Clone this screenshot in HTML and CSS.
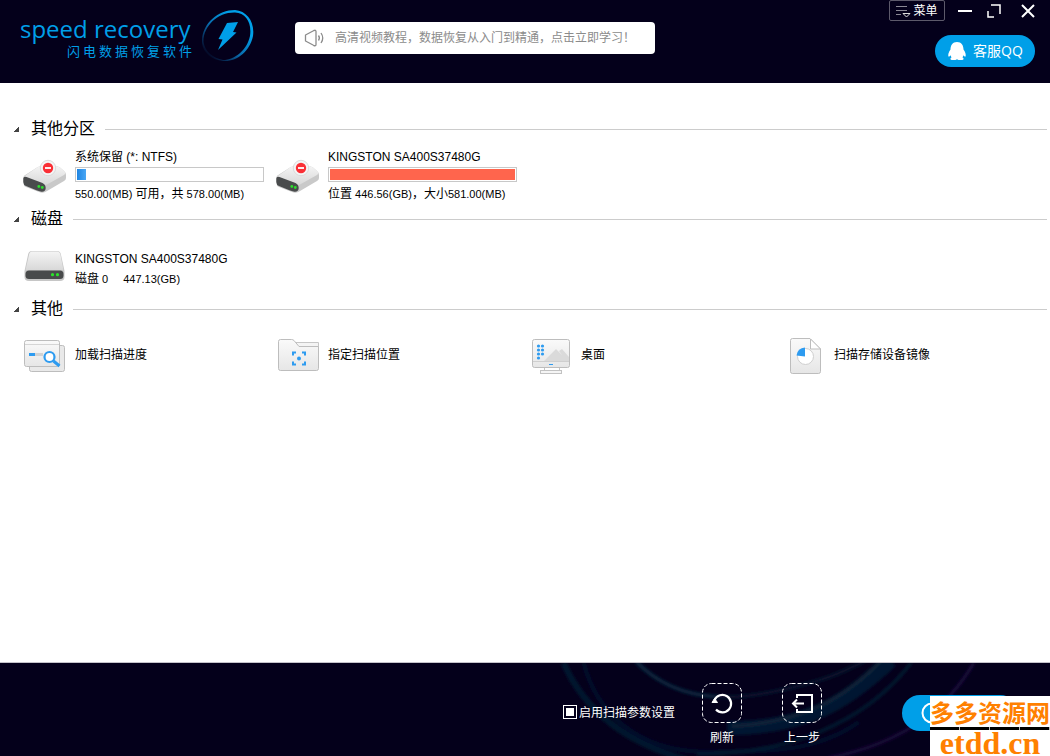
FILE: index.html
```html
<!DOCTYPE html>
<html lang="zh-CN">
<head>
<meta charset="utf-8">
<title>闪电数据恢复软件</title>
<link rel="stylesheet" href="styles.css">
</head>
<body>
<svg class="defs" aria-hidden="true">
  <defs>
    <linearGradient id="metal" x1="0" y1="0" x2="0" y2="1"><stop offset="0" stop-color="#f4f4f4"/><stop offset="1" stop-color="#d8d8d8"/></linearGradient>
    <linearGradient id="paper" x1="0" y1="0" x2="0" y2="1"><stop offset="0" stop-color="#fafafa"/><stop offset="1" stop-color="#e6e6e6"/></linearGradient>
    <linearGradient id="ring" x1="1" y1="0" x2="0.1" y2="0.9"><stop offset="0.3" stop-color="#009fe8"/><stop offset="0.65" stop-color="#0a68a8"/><stop offset="1" stop-color="#04001b"/></linearGradient>
    <filter id="soft"><feGaussianBlur stdDeviation="1.500"/></filter>
    <symbol id="drive-locked" viewBox="0 0 44 36">
      <path d="M1.500 20Q1.500 18.500 4 17.500L15 10.500Q17 9 20 9H33Q36 9 38 10.500L42 14Q44 15.500 44 18V21Q44 23 42 24L25 34Q21 37 17 35L4 30Q1.500 29 1.300 26Z" fill="#c9c9c9"/>
      <path d="M2 19.500 15 10.500Q17 9 20 9H33Q36 9 38 10.500L42.500 14.500Q44 16.500 42 18L25 27.500Q23 28.500 20 27Z" fill="url(#metal)"/>
      <path d="M1.300 21.500Q1.500 19 4.500 20L20.500 26Q23.700 27.500 23.700 31Q23.500 35 19.500 34.700Q17 34.500 4 29Q1.500 28 1.300 25Z" fill="#494b4c"/>
      <circle cx="16.800" cy="29.500" r="1.400" fill="#2edc2e"/><circle cx="20.300" cy="30.500" r="1.400" fill="#2edc2e"/>
      <circle cx="26" cy="11" r="7.700" fill="#f4f4f4" stroke="#d4d4d4" stroke-width=".8"/>
      <circle cx="26" cy="11" r="5.200" fill="#fa2f35"/><path d="M23 11h6" stroke="#fff" stroke-width="1.800"/>
    </symbol>
  </defs>
</svg>

<header class="topbar">
  <div class="brand">
    <div class="brand-text">
      <div class="brand-en">speed recovery</div>
      <div class="brand-cn">闪电数据恢复软件</div>
    </div>
    <svg class="brand-mark" viewBox="0 0 52 52" width="52" height="52" aria-hidden="true">
      <path d="M0 33C-1 15 15 0 33 0C45 1 53 12 51 26C48 41 35 52 21 51C10 50 1 43 0 33ZM1.500 32C3 42 11 48 21 50C33 50 45 40 48 26C50 13 44 3 33 2.500C16 2 1 16 1.500 32Z" fill="url(#ring)" fill-rule="evenodd"/>
      <path d="M25 13 36 12 31 22 34.500 22.500 16 40 20.500 29.500 16.500 29Z" fill="#009fe8"/>
    </svg>
  </div>
  <a class="notice" href="#">
    <svg width="22" height="20" viewBox="0 0 22 20" fill="none" stroke="#8b8b8b" stroke-width="1.300" stroke-linejoin="round" aria-hidden="true"><path d="M1.500 7 9.500 2.700Q12 1.500 12 3.500V16.500Q12 18.500 9.500 17.300L1.500 13ZM14.500 7.500Q16.300 10 14.500 12.500M17 5Q20.500 10 17 15"/></svg>
    <span>高清视频教程，数据恢复从入门到精通，点击立即学习！</span>
  </a>
  <div class="tools">
    <div class="window-buttons">
      <button class="menu-button" type="button">
        <svg width="15" height="14" viewBox="0 0 15 14" fill="none" aria-hidden="true"><path d="M0 2.500H11M0 6.500H11M0 10.500H5" stroke="#8a8894"/><path d="M7 9.500H14L10.500 13Z" stroke="#ddd"/></svg>
        <span>菜单</span>
      </button>
      <button class="win" type="button" aria-label="最小化"><svg width="14" height="14" viewBox="0 0 14 14"><path d="M0 7H14" stroke="#fff" stroke-width="2"/></svg></button>
      <button class="win" type="button" aria-label="最大化"><svg width="14" height="14" viewBox="0 0 14 14" fill="none" stroke="#fff" stroke-width="1.500"><path d="M4 1H13V10M1 7V13H7"/></svg></button>
      <button class="win" type="button" aria-label="关闭"><svg width="14" height="14" viewBox="0 0 14 14"><path d="M1 1 13 13M13 1 1 13" stroke="#fff" stroke-width="2"/></svg></button>
    </div>
    <button class="service" type="button">
      <svg width="20" height="20" viewBox="0 0 20 20" fill="#fff" aria-hidden="true"><path d="M10 1C5.500 1 3.500 4.500 3.500 8.500C1.500 11 .8 14 1.500 15.500C2 16 3 15 3.500 14.300L4.500 16.500C3 17 3 19 5 19H8.500L10 18.300 11.500 19H15C17 19 17 17 15.500 16.500L16.500 14.300C17 15 18 16 18.500 15.500C19.200 14 18.500 11 16.500 8.500C16.500 4.500 14.500 1 10 1Z"/></svg>
      <span>客服QQ</span>
    </button>
  </div>
</header>

<main class="content">
  <section>
    <h2 class="heading"><i class="caret"></i><span>其他分区</span></h2>
    <div class="items partitions">
      <div class="item">
        <svg class="icon" viewBox="0 0 44 36" aria-hidden="true"><use href="#drive-locked"/></svg>
        <div class="info">
          <div class="name">系统保留 (*: NTFS)</div>
          <div class="usage"><div class="used" style="width:5%"></div></div>
          <div class="detail">550.00(MB) <span>可用，共</span> 578.00(MB)</div>
        </div>
      </div>
      <div class="item">
        <svg class="icon" viewBox="0 0 44 36" aria-hidden="true"><use href="#drive-locked"/></svg>
        <div class="info">
          <div class="name">KINGSTON SA400S37480G</div>
          <div class="usage"><div class="used full" style="width:100%"></div></div>
          <div class="detail"><span>位置</span> 446.56(GB)<span>，大小</span>581.00(MB)</div>
        </div>
      </div>
    </div>
  </section>
  <section>
    <h2 class="heading"><i class="caret"></i><span>磁盘</span></h2>
    <div class="items disks">
      <div class="item">
        <svg class="icon" viewBox="0 0 44 36" aria-hidden="true">
          <path d="M6 5Q6.500 1 10 1H35Q38.500 1 39 5L42.500 21V27Q42.500 31 38 31H7Q2.500 31 2.500 27V21Z" fill="#c6c6c6"/>
          <path d="M7 5Q7.500 1.500 10 1.500H35Q38 1.500 38.500 5L41.500 20H3.500Z" fill="url(#metal)"/>
          <rect x="3.500" y="20.500" width="38" height="8.500" rx="3.500" fill="#484a4b"/>
          <circle cx="30.500" cy="24.700" r="1.600" fill="#2be32b"/><circle cx="35.500" cy="24.700" r="1.600" fill="#2be32b"/>
        </svg>
        <div class="info disk-info">
          <div class="name">KINGSTON SA400S37480G</div>
          <div class="detail disk-detail"><div><span>磁盘</span> 0</div><div>447.13(GB)</div></div>
        </div>
      </div>
    </div>
  </section>
  <section>
    <h2 class="heading"><i class="caret"></i><span>其他</span></h2>
    <div class="items others">
      <div class="item">
        <svg class="icon" viewBox="0 0 44 36" aria-hidden="true">
          <rect x="7.500" y="7.500" width="35" height="26" rx="2" fill="#e9e9e9" stroke="#bdbdbd"/>
          <rect x="2.500" y="2.500" width="35" height="26" rx="2" fill="url(#paper)" stroke="#bdbdbd"/><path d="M3 6.500H37" stroke="#d5d5d5"/>
          <path d="M7 16.500H13" stroke="#2d9bf0" stroke-width="3"/><path d="M13 16.500H21" stroke="#d2d2d2" stroke-width="3"/>
          <circle cx="27.500" cy="19" r="5" fill="#fff" stroke="#2d9bf0" stroke-width="2.200"/><path d="M31.500 23 37.500 28" stroke="#2d9bf0" stroke-width="3"/>
        </svg>
        <button class="action" type="button">加载扫描进度</button>
      </div>
      <div class="item">
        <svg class="icon" viewBox="0 0 44 36" aria-hidden="true">
          <path d="M20 4.500H43.500V12H20Z" fill="#f4f4f4" stroke="#c6c6c6"/>
          <path d="M3.500 3.500Q3.500 1.500 5.500 1.500H16.500Q18 1.500 19 2.500L24 8.500H43.500V30.500Q43.500 32.500 41.500 32.500H5.500Q3.500 32.500 3.500 30.500Z" fill="url(#paper)" stroke="#bdbdbd"/>
          <path d="M18 17.500V14.500H21M27 14.500H30V17.500M18 23.500V26.500H21M27 26.500H30V23.500" fill="none" stroke="#2d9bf0" stroke-width="2"/><circle cx="24" cy="20.500" r="2" fill="#2d9bf0"/>
        </svg>
        <button class="action" type="button">指定扫描位置</button>
      </div>
      <div class="item">
        <svg class="icon" viewBox="0 0 44 36" aria-hidden="true">
          <path d="M16.500 30V32.500M31.500 30V32.500" stroke="#c4c4c4"/><rect x="12.500" y="32.500" width="21" height="3" fill="#f5f5f5" stroke="#c2c2c2"/>
          <rect x="4.500" y="1.500" width="37" height="28" rx="2" fill="url(#paper)" stroke="#bdbdbd"/>
          <path d="M16 23 28 11 34 17 31 13 34 11 41 19V23Z" fill="#dadada"/><path d="M5 23.500H41" stroke="#cfcfcf"/><path d="M21 26.500H25" stroke="#2d9bf0"/>
          <g fill="#2d9bf0"><circle cx="10.500" cy="8" r="1.600"/><circle cx="14.500" cy="8" r="1.600"/><circle cx="10.500" cy="12" r="1.600"/><circle cx="14.500" cy="12" r="1.600"/><circle cx="10.500" cy="16" r="1.600"/><circle cx="14.500" cy="16" r="1.600"/><circle cx="10.500" cy="20" r="1.600"/></g>
        </svg>
        <button class="action" type="button">桌面</button>
      </div>
      <div class="item">
        <svg class="icon" viewBox="0 0 44 36" aria-hidden="true">
          <path d="M9.500 2.500Q9.500.5 11.500.5H29L39.500 11V33.500Q39.500 35.500 37.500 35.500H11.500Q9.500 35.500 9.500 33.500Z" fill="url(#paper)" stroke="#bdbdbd"/>
          <path d="M29.500 1V11H39.500Z" fill="#fff" stroke="#bdbdbd"/>
          <circle cx="24.500" cy="18.500" r="8" fill="#fff" stroke="#cfcfcf"/><path d="M24 18.500V9.500Q16.500 10 15.500 17.500Z" fill="#2d9bf0"/>
        </svg>
        <button class="action" type="button">扫描存储设备镜像</button>
      </div>
    </div>
  </section>
</main>

<footer class="bottombar">
  <svg class="waves" viewBox="0 0 530 94" preserveAspectRatio="none" aria-hidden="true">
    <g fill="none" filter="url(#soft)">
      <path d="M48 0C70 50 110 80 170 98" stroke="#06142f" stroke-width="6"/>
      <path d="M68 0C80 48 120 90 190 90S300 88 340 60" stroke="#05112b" stroke-width="4"/>
      <path d="M120 0C160 38 205 40 260 28S330 6 350 -4" stroke="#07192f" stroke-width="3"/>
      <path d="M120 -2C140 20 165 32 200 34" stroke="#0b2b42" stroke-width="3"/>
      <path d="M210 66C290 66 330 38 372 -2" stroke="#061433" stroke-width="14"/>
      <path d="M215 64C285 60 325 36 362 -2" stroke="#0a2438" stroke-width="4"/>
      <path d="M180 92C270 92 345 62 392 0" stroke="#061a30" stroke-width="3"/>
      <path d="M310 96C390 80 430 42 454 0" stroke="#1b0a3c" stroke-width="3"/>
    </g>
  </svg>
  <label class="option"><input type="checkbox"><span>启用扫描参数设置</span></label>
  <button class="step refresh" type="button">
    <svg width="40" height="40" viewBox="0 0 40 40" fill="none" stroke="#fff" aria-hidden="true"><rect x=".5" y=".5" width="39" height="39" rx="9" stroke-dasharray="4 2"/><path d="M12.500 17A8.700 8.700 0 1 1 14 26.500" stroke-width="2.200"/><path d="M10 19.500 12.500 15.500 15.500 19.500Z" fill="#fff"/></svg>
    <span>刷新</span>
  </button>
  <button class="step back" type="button">
    <svg width="40" height="40" viewBox="0 0 40 40" fill="none" stroke="#fff" aria-hidden="true"><rect x=".5" y=".5" width="39" height="39" rx="9" stroke-dasharray="4 2"/><path d="M15 15V12H30V29H15V26" stroke-width="2"/><path d="M11 20.500H22M15 16.500 11 20.500 15 24.500" stroke-width="2"/></svg>
    <span>上一步</span>
  </button>
  <button class="scan" type="button" aria-label="扫描"><svg width="22" height="22" viewBox="0 0 22 22" fill="none" stroke="#fff" stroke-width="2"><circle cx="11" cy="11" r="9.500"/></svg></button>
  <div class="stamp">
    <div class="stamp-cn">多多资源网</div>
    <div class="stamp-line"></div>
    <div class="stamp-en">etdd.cn</div>
  </div>
</footer>
</body>
</html>
```

FILE: styles.css
```css
* { box-sizing: border-box; }
body {
  margin: 0;
  min-height: 100vh;
  display: flex;
  flex-direction: column;
  background: #fff;
  color: #000;
  font: 12px/16px "Liberation Sans", "Noto Sans CJK SC", sans-serif;
}
button { padding: 0; border: 0; background: none; color: inherit; font: inherit; }
svg { display: block; flex: none; }
.defs { position: absolute; width: 0; height: 0; }

.topbar { display: flex; align-items: flex-start; height: 83px; background: #04001b; color: #fff; }
.brand { display: flex; width: 295px; padding: 10px 0 0 20px; gap: 11px; color: #009fe8; }
.brand-text { width: 171px; white-space: nowrap; }
.brand-en { padding-top: 4px; font: 24px/29px "Open Sans", sans-serif; }
.brand-cn { padding-left: 47px; font-size: 13px; line-height: 18px; letter-spacing: 3px; }
.notice {
  display: flex; align-items: center; gap: 9px;
  width: 360px; height: 32px; margin-top: 22px; padding-left: 9px;
  border-radius: 4px; background: #fff; color: #8b8b8b;
  text-decoration: none; white-space: nowrap;
}
.tools { display: flex; flex-direction: column; align-items: flex-end; gap: 14px; margin-left: auto; padding-right: 15px; }
.window-buttons { display: flex; align-items: center; height: 21px; }
.menu-button {
  display: flex; align-items: center; justify-content: center; gap: 2px;
  width: 56px; height: 21px; margin-right: 13px;
  border: 1px solid #5d5a6b; border-radius: 2px;
}
.win + .win { margin-left: 15px; }
.win:last-child { margin-left: 20px; }
.service {
  display: flex; align-items: center; justify-content: center; gap: 6px;
  width: 100px; height: 32px; border-radius: 16px; background: #009fe8; font: 14px/20px "Open Sans", "Noto Sans CJK SC", sans-serif;
}

.content { flex: 1; padding: 35px 3px 20px 13px; }
.heading { display: flex; align-items: center; height: 20px; margin: 0; font-size: 16px; font-weight: 400; line-height: 20px; }
.heading span { padding-top: 2px; }
.heading::after { content: ""; flex: 1; height: 1px; margin: 2px 0 0 10px; background: #ccc; }
.caret { width: 6px; height: 6px; margin: 2px 12px 0 0; background: linear-gradient(135deg, transparent 50%, #444 50%); }
.items { display: grid; grid-template-columns: repeat(4, 1fr); align-items: center; height: 70px; padding: 0 13px 0 9px; }
.partitions { padding-top: 4px; }
.disks { padding-top: 10px; }
.others { padding-top: 6px; }
.item { display: flex; align-items: center; gap: 9px; white-space: nowrap; }
.icon { width: 44px; height: 36px; }
.info { width: 189px; }
.name { line-height: 16px; font-size: 12px; }
.usage { height: 15px; margin: 2px 0 4px; padding: 1px; border: 1px solid #c8c8c8; }
.used { height: 100%; background: linear-gradient(90deg, #1f85e2, #4aa7f5); }
.used.full { background: #ff654d; }
.detail { font-size: 11px; line-height: 16px; }
.detail span { font-size: 12px; }
.disk-info { padding-top: 2px; }
.disk-info .name { margin-bottom: 4px; }
.disk-detail { display: flex; gap: 15px; }
.action { padding-bottom: 2px; }

.bottombar {
  position: relative; overflow: hidden;
  display: flex; align-items: flex-start; justify-content: flex-end;
  height: 94px; padding: 20px 32px 0 0;
  border-top: 1px solid #c5c3cb; background: #04001b; color: #fff;
}
.waves { position: absolute; top: 0; right: 0; width: 51%; height: 100%; }
.option { position: relative; display: flex; align-items: center; gap: 2px; height: 58px; margin-right: 27px; }
.option span { padding-top: 2px; }
.option input { appearance: none; width: 14px; height: 14px; margin: 0; border: 1px solid #fff; background: #fff content-box; padding: 2px; }
.step { position: relative; display: flex; flex-direction: column; align-items: center; gap: 7px; width: 40px; white-space: nowrap; }
.back { margin: 0 80px 0 40px; }
.scan { position: relative; display: flex; align-items: center; width: 116px; height: 36px; margin-top: 12px; padding-left: 19px; border-radius: 18px; background: #009fe8; }
.stamp { position: absolute; right: 0; bottom: 0; width: 120px; height: 60px; background: #fff; color: #ff8000; white-space: nowrap; text-align: center; }
.stamp-cn { font: 700 24px/31px "Noto Sans CJK SC", sans-serif; }
.stamp-line { height: 3px; background: repeating-linear-gradient(90deg, #000 0 29px, #bbb 29px 30px); }
.stamp-en { font: 700 32px/26px "Liberation Serif", serif; }
```
